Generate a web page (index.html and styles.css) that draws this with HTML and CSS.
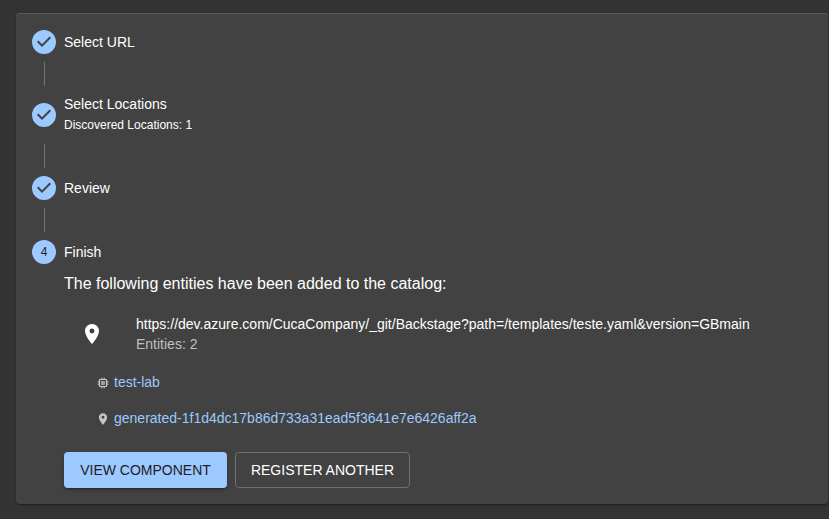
FILE: index.html
```
<!DOCTYPE html>
<html lang="en">
<head>
<meta charset="utf-8">
<title>Register component</title>
<link rel="stylesheet" href="styles.css">
</head>
<body>
<main class="card">
  <div class="step">
    <svg class="step-icon" viewBox="0 0 24 24"><path d="M12 0a12 12 0 1 0 0 24 12 12 0 0 0 0-24zm-2 17l-5-5 1.4-1.4 3.6 3.6 7.6-7.6L19 8l-9 9z"/></svg>
    <span class="step-label">Select URL</span>
  </div>
  <div class="connector"></div>
  <div class="step">
    <svg class="step-icon" viewBox="0 0 24 24"><path d="M12 0a12 12 0 1 0 0 24 12 12 0 0 0 0-24zm-2 17l-5-5 1.4-1.4 3.6 3.6 7.6-7.6L19 8l-9 9z"/></svg>
    <div>
      <div class="step-label">Select Locations</div>
      <div class="caption">Discovered Locations: 1</div>
    </div>
  </div>
  <div class="connector"></div>
  <div class="step">
    <svg class="step-icon" viewBox="0 0 24 24"><path d="M12 0a12 12 0 1 0 0 24 12 12 0 0 0 0-24zm-2 17l-5-5 1.4-1.4 3.6 3.6 7.6-7.6L19 8l-9 9z"/></svg>
    <span class="step-label">Review</span>
  </div>
  <div class="connector"></div>
  <div class="step">
    <span class="step-number">4</span>
    <span class="step-label">Finish</span>
  </div>
  <section class="content">
    <p class="message">The following entities have been added to the catalog:</p>
    <div class="location">
      <svg class="pin" viewBox="0 0 24 24"><path d="M12 2C8.13 2 5 5.13 5 9c0 5.25 7 13 7 13s7-7.75 7-13c0-3.87-3.13-7-7-7zm0 9.5a2.5 2.5 0 0 1 0-5 2.5 2.5 0 0 1 0 5z"/></svg>
      <div>
        <div class="url">https://dev.azure.com/CucaCompany/_git/Backstage?path=/templates/teste.yaml&amp;version=GBmain</div>
        <div class="count">Entities: 2</div>
      </div>
    </div>
    <ul class="entities">
      <li class="entity">
        <svg class="entity-icon" viewBox="0 0 24 24"><path d="M15 9H9v6h6V9zm-2 4h-2v-2h2v2zm8-2V9h-2V7c0-1.1-.9-2-2-2h-2V3h-2v2h-2V3H9v2H7c-1.1 0-2 .9-2 2v2H3v2h2v2H3v2h2v2c0 1.1.9 2 2 2h2v2h2v-2h2v2h2v-2h2c1.1 0 2-.9 2-2v-2h2v-2h-2v-2h2zm-4 6H7V7h10v10z"/></svg>
        <a class="link">test-lab</a>
      </li>
      <li class="entity">
        <svg class="entity-icon" viewBox="0 0 24 24"><path d="M12 2C8.13 2 5 5.13 5 9c0 5.25 7 13 7 13s7-7.75 7-13c0-3.87-3.13-7-7-7zm0 9.5a2.5 2.5 0 0 1 0-5 2.5 2.5 0 0 1 0 5z"/></svg>
        <a class="link">generated-1f1d4dc17b86d733a31ead5f3641e7e6426aff2a</a>
      </li>
    </ul>
    <div class="actions">
      <button class="button primary">VIEW COMPONENT</button>
      <button class="button outlined">REGISTER ANOTHER</button>
    </div>
  </section>
</main>
</body>
</html>
```
FILE: styles.css
```
* { box-sizing: border-box; }
body {
  margin: 0;
  padding: 13px 1px 15px 16px;
  height: 519px;
  overflow: hidden;
  background: #333;
  color: #fff;
  font: 14px/20px "Liberation Sans", Arial, sans-serif;
}
.card {
  height: 491px;
  padding: 17px 16px 16px;
  border-radius: 4px;
  background: #424242;
  box-shadow: inset 0 1px #5a5a5a, 0 2px 1px -1px rgba(0,0,0,.2), 0 1px 1px rgba(0,0,0,.14), 0 1px 3px rgba(0,0,0,.12);
}
.step { display: flex; align-items: center; gap: 8px; }
.step-icon { width: 24px; height: 24px; fill: #9cc9ff; flex: none; }
.step-label { display: block; }
.step-number {
  width: 24px;
  height: 24px;
  border-radius: 50%;
  background: #9cc9ff;
  color: #212121;
  font-size: 12px;
  line-height: 24px;
  text-align: center;
}
.caption { font-size: 12px; line-height: 20px; padding-bottom: 1px; margin-top: 1px; }
.connector { width: 1px; height: 24px; margin: 8px 0 8px 12px; background: #757575; }
.content { padding-left: 32px; }
.message { margin: 8px 0 0; font-size: 16px; line-height: 24px; }
.location { display: flex; align-items: center; gap: 32px; margin: 18px 0 0 16px; }
.pin { width: 24px; height: 24px; fill: #fff; flex: none; }
.location { gap: 32px; }
.location .pin { margin-right: 0; }
.count { color: #c0c0c0; }
.entities { list-style: none; margin: 10px 0 0; padding: 0 0 0 32px; }
.entity { display: flex; align-items: center; gap: 4px; height: 36px; }
.entity-icon { width: 14px; height: 14px; fill: #c6c6c6; position: relative; top: 1px; }
.link { color: #9cc9ff; }
.actions { display: flex; gap: 8px; margin-top: 16px; }
.button {
  height: 36px;
  padding: 0;
  border: 0;
  border-radius: 4px;
  font: 14px/20px "Liberation Sans", Arial, sans-serif;
}
.primary {
  width: 163px;
  background: #9cc9ff;
  color: #212121;
  box-shadow: 0 3px 1px -2px rgba(0,0,0,.2), 0 2px 2px rgba(0,0,0,.14), 0 1px 5px rgba(0,0,0,.12);
}
.outlined { width: 175px; border: 1px solid #6f6f6f; background: transparent; color: #fff; }
```
